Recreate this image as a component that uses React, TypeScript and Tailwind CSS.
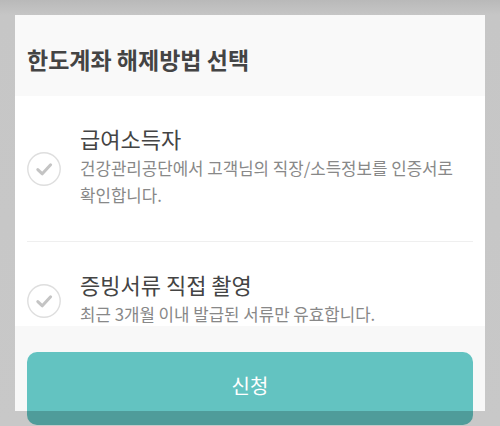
const FONT = { fontFamily: '"Noto Sans CJK KR", "Noto Sans KR", "Liberation Sans", sans-serif' }

interface Option {
  title: string
  desc: string
}

const OPTIONS: Option[] = [
  { title: '급여소득자', desc: '건강관리공단에서 고객님의 직장/소득정보를 인증서로 확인합니다.' },
  { title: '증빙서류 직접 촬영', desc: '최근 3개월 이내 발급된 서류만 유효합니다.' },
]

function CheckCircle() {
  return (
    <svg className="w-[34px] h-[34px] shrink-0 mt-[8px]" viewBox="0 0 34 34" fill="none">
      <circle cx="17" cy="17" r="16.2" stroke="#dedede" strokeWidth="1.4" />
      <path
        d="M10.8 17.6L15.3 21.8L23.6 12.8"
        stroke="#c4c4c4"
        strokeWidth="3"
        strokeLinecap="round"
        strokeLinejoin="round"
      />
    </svg>
  )
}

export default function App() {
  return (
    <div
      className="w-[500px] h-[426px] overflow-hidden pt-[15px] px-[15px] bg-[linear-gradient(to_bottom,#b9b9b9,#c6c6c6_15px,#c8c8c8)]"
      style={FONT}
    >
      <div className="w-[470px] h-[396px] flex flex-col bg-white">
        <div className="h-[81px] shrink-0 bg-[#f9f9f9] px-[12px] pt-[27px]">
          <h1 className="text-[23px] leading-[34px] font-bold text-[#444]">
            한도계좌 해제방법 선택
          </h1>
        </div>

        <div className="flex-1 overflow-hidden px-[12px]">
          {OPTIONS.map((opt, i) => (
            <div
              key={opt.title}
              className={`flex items-center gap-[19px] pt-[25px] pb-[33px] ${i === 0 ? 'border-b border-[#efefef]' : ''}`}
            >
              <CheckCircle />
              <div className="flex-1 min-w-0 max-w-[385px]">
                <p className="text-[22px] leading-[34px] text-[#444]">{opt.title}</p>
                <p className="text-[16.8px] leading-[26.5px] text-[#888]">{opt.desc}</p>
              </div>
            </div>
          ))}
        </div>

        <div className="h-[85px] shrink-0 bg-[#f8f8f8] px-[12px] pt-[26px]">
          <button className="w-full h-[73px] rounded-[10px] text-white text-[20px] bg-[linear-gradient(to_bottom,#63c3c1_59px,#4f9c9a_59px)]">
            <span className="relative -top-[3px]">신청</span>
          </button>
        </div>
      </div>
    </div>
  )
}
